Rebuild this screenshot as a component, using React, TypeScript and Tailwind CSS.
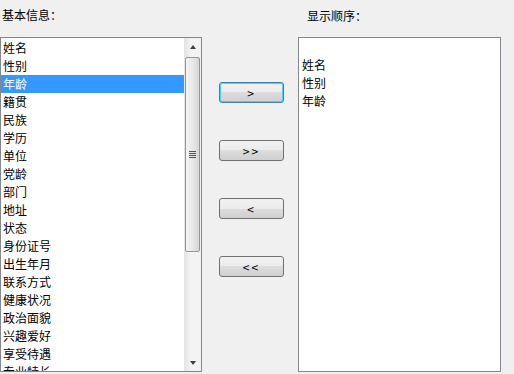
import React from "react";

const baseItems = [
  "姓名", "性别", "年龄", "籍贯", "民族", "学历", "单位", "党龄", "部门", "地址", "状态",
  "身份证号", "出生年月", "联系方式", "健康状况", "政治面貌", "兴趣爱好", "享受待遇", "专业特长",
];

const ordered = ["", "姓名", "性别", "年龄"];

const font = { fontFamily: '"Noto Sans CJK SC", "Noto Sans", sans-serif' };

function Btn({ label, focused }: { label: string; focused?: boolean }) {
  return (
    <button
      className={
        "h-[21px] w-[65px] rounded-[3px] border text-[12px] leading-none tracking-[2px] text-black bg-[linear-gradient(to_bottom,#f2f2f2_0%,#ebebeb_50%,#dddddd_50%,#cfcfcf_100%)] " +
        (focused
          ? "border-[#3c7fb1] shadow-[inset_0_0_0_1px_#48d2fb]"
          : "border-[#707070]")
      }
    >
      {label}
    </button>
  );
}

function ScrollBar() {
  return (
    <div className="flex h-full w-[17px] flex-col bg-[linear-gradient(to_right,#e3e3e3,#f3f3f3_40%,#f3f3f3)]">
      <div className="flex h-[17px] items-center justify-center">
        <div className="h-0 w-0 border-x-[3px] border-b-[4px] border-x-transparent border-b-[#404040]" />
      </div>
      <div className="mx-[1px] mt-[2px] flex h-[195px] items-center justify-center rounded-[2px] border border-[#969696] bg-[linear-gradient(to_right,#f4f4f4,#e8e8e8_50%,#d6d6d6)]">
        <div className="flex flex-col gap-[1px]">
          <div className="h-[1px] w-[7px] bg-[#555]" />
          <div className="h-[1px] w-[7px] bg-[#555]" />
          <div className="h-[1px] w-[7px] bg-[#555]" />
          <div className="h-[1px] w-[7px] bg-[#555]" />
        </div>
      </div>
      <div className="flex-1" />
      <div className="flex h-[17px] items-center justify-center">
        <div className="h-0 w-0 border-x-[3px] border-t-[4px] border-x-transparent border-t-[#404040]" />
      </div>
    </div>
  );
}

export default function App() {
  return (
    <div className="flex h-[374px] w-[514px] bg-[#f0f0f0] text-[12px] text-black" style={font}>
      <div className="flex w-[202px] flex-col">
        <div className="h-[37px] pl-[2px] pt-[7px] leading-[16px]">基本信息：</div>
        <div className="flex h-[335px] border border-[#828790] bg-white">
          <div className="flex-1 overflow-hidden pt-[1px]">
            {baseItems.map((t) => (
              <div
                key={t}
                className={
                  "h-[18px] pl-[2px] leading-[18px] " +
                  (t === "年龄" ? "bg-[#3399ff] text-white" : "")
                }
              >
                {t}
              </div>
            ))}
          </div>
          <ScrollBar />
        </div>
      </div>

      <div className="ml-[17px] flex w-[65px] flex-col gap-[37px] pt-[82px]">
        <Btn label=">" focused />
        <Btn label=">>" />
        <Btn label="<" />
        <Btn label="<<" />
      </div>

      <div className="ml-[14px] flex w-[203px] flex-col">
        <div className="h-[37px] pl-[9px] pt-[8px] leading-[16px]">显示顺序：</div>
        <div className="h-[335px] overflow-hidden border border-[#828790] bg-white">
          {ordered.map((t, i) => (
            <div key={i} className="h-[18px] pl-[3px] leading-[18px]">
              {t}
            </div>
          ))}
        </div>
      </div>
    </div>
  );
}
